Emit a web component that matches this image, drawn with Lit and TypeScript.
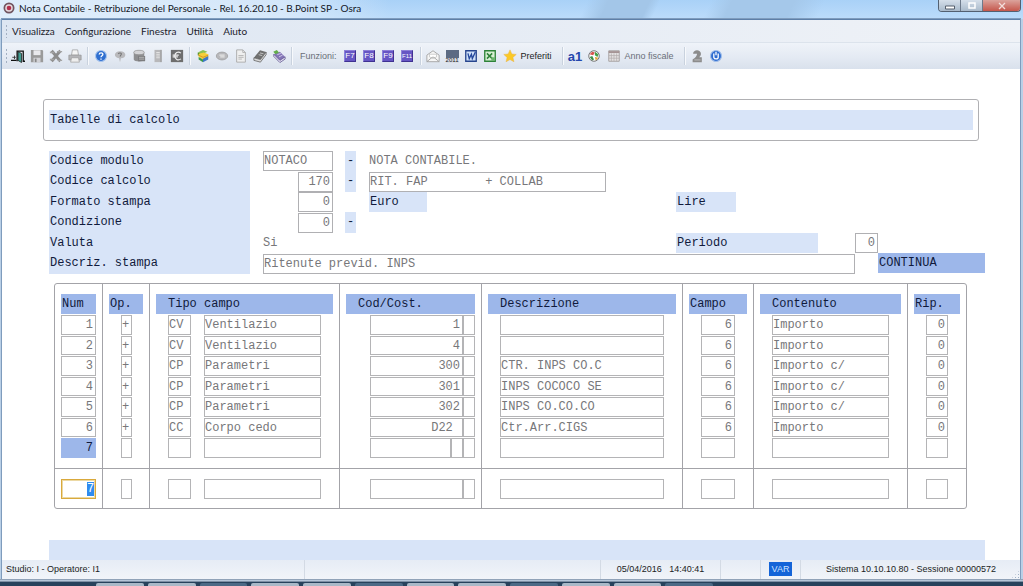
import { LitElement, html, svg, css, nothing } from 'lit';
import { customElement, property } from 'lit/decorators.js';
import { classMap } from 'lit/directives/class-map.js';

const glyphs: Record<string, unknown> = {
  exit: svg`<path d="M0 13h6M7 14V2.500h7V14h2" fill="none" stroke="#111" stroke-width="1.500"/><path d="M8 3l4 2v10.500l-4-2.500z" fill="#3f9d92" stroke="#111" stroke-width=".8"/><path d="M1.500 9.500h4M4 7.500v4" stroke="#333"/>`,
  save: svg`<path d="M1 1h13l1 1v13H1z" fill="#9a9a9a"/><path d="M4 1.500h8V7H4z" fill="#e9e9ec"/><path d="M4 10h8v5H4z" fill="#d2d2d6"/><path d="M5.500 11h2v4h-2z" fill="#888"/>`,
  cancel: svg`<path d="M3 2l10 12M13 2L3 14" stroke="#8c8c8c" stroke-width="3.400"/><path d="M1 4h5M9 3h6M1 12h5M10 13h5" stroke="#a4a4a4" stroke-width="1.500"/>`,
  print: svg`<path d="M5 1h6l1 6H4z" fill="#f4f4f4" stroke="#999" stroke-width=".8"/><path d="M1 7h14v5.500H1z" fill="#b5b5b8" stroke="#929292" stroke-width=".8"/><path d="M4 10h8l1 5H3z" fill="#eee" stroke="#999" stroke-width=".8"/>`,
  help: svg`<circle cx="8" cy="8" r="6.300" fill="#2f6fd0" stroke="#a9c6ee" stroke-width="1.300"/><path d="M5.900 6.300c.2-2.600 4.400-2.400 4.200 0C10 7.800 8 7.700 8 9.500M8 10.800v1.500" fill="none" stroke="#fff" stroke-width="1.500"/>`,
  bubble: svg`<path d="M8 2.500c8 0 8 8 1 8L8 15l-1-4.500C0 9.500 1 2.500 8 2.500z" fill="#b9b9bc"/><path d="M6 5.500c1-1.500 4-1 3.500.5L8 8.500" fill="none" stroke="#777" stroke-width="1.300"/>`,
  drum: svg`<path d="M2 4v8c0 3 12 3 12 0V4z" fill="#8e8e90"/><ellipse cx="8" cy="4" rx="6" ry="2.500" fill="#d4d4d7" stroke="#888" stroke-width=".7"/><path d="M7 8h8v6H7z" fill="#7c7c7e"/><path d="M8 9.500h6M8 11.500h6" stroke="#ccc" stroke-width=".8"/>`,
  sheet: svg`<path d="M4 1h8v14H4z" fill="#b8b8ba"/><path d="M6 4h4M6 6h4M6 8h4M6 10h4" stroke="#e8e8e8"/><path d="M11.500 1v14" stroke="#8c8c8c"/>`,
  coin: svg`<path d="M1 1h14v14H1z" fill="#6e6e6e"/><path d="M12.500 4.700C9 2 5.500 4.500 5.500 8s3.500 6 7 3.300M3 7h7M3 9h6" fill="none" stroke="#eee" stroke-width="1.400"/>`,
  books: svg`<path d="M2 4l6-3 5 2-6 3z" fill="#8cc152"/><path d="M2 4l5 2v3L2 7z" fill="#4a8c2b"/><path d="M3 5.500L9 4l5 2v4l-6 2-5-3z" fill="#f5cf3a"/><path d="M3 9l5 3v3l-5-3z" fill="#3f9a4a"/><path d="M8 11l6-3v4l-6 3z" fill="#3f78c8"/><path d="M3 7l5 2.500 6-2.500" fill="none" stroke="#d68c1e"/>`,
  disc: svg`<ellipse cx="8" cy="8" rx="6.500" ry="4.500" fill="#b8b8bb" stroke="#9a9a9a" stroke-width=".8"/><path d="M5 7h6M6 9h5" stroke="#e5e5e5" stroke-width="1.200"/>`,
  page: svg`<path d="M3 1h7l3 3v11H3z" fill="#efefef" stroke="#a8a8a8"/><path d="M10 1v3h3M5 7.500h6M5 9.500h6M5 11.500h4" fill="none" stroke="#b0b0b0"/>`,
  book: svg`<path d="M1 10l7-8.500 7 2L8.500 12z" fill="#707070"/><path d="M1 10l7.500 2L15 3.500V6.500L8.500 15 1 13z" fill="#d8d8d8" stroke="#555" stroke-width=".8"/><path d="M6.500 6.500l4 1M8 4.500l4 1" stroke="#ccc"/>`,
  address: svg`<path d="M2 6l7-3 6 6-6 4z" fill="#8475b6"/><path d="M9 13l6-4v2.500L9 15.500 2 8.500V6z" fill="#e4e0f0" stroke="#554988" stroke-width=".8"/><path d="M6 6.500l4-1.500M8 9l4-2" stroke="#d8d2ee"/><path d="M1.500 3l4-2 2.500 3-4 2z" fill="#62ad4b"/>`,
  mail: svg`<path d="M1 7l7-5 7 5v7.500H1z" fill="#f6f6f6" stroke="#a0a0a0"/><path d="M4 6h8v3l-4 2-4-2z" fill="#fff" stroke="#b4b4b4" stroke-width=".7"/><path d="M1 14.500L7 9.500h2l6 5" fill="none" stroke="#a0a0a0"/>`,
  word: svg`<path d="M2 2h12v12H2z" fill="#cfe0f8" stroke="#27458d" stroke-width="1.500"/><path d="M4.500 5L6 11 8.500 6l1 5 3.500-7.500" fill="none" stroke="#24479c" stroke-width="1.500"/>`,
  excel: svg`<path d="M2 2h12v12H2z" fill="#d8f0d4" stroke="#2d8238" stroke-width="1.500"/><path d="M4.500 5l6 6M10.500 5l-6 6" stroke="#2d8238" stroke-width="1.700"/><path d="M9.500 9.500h4v4h-4z" fill="#6bb56d"/>`,
  star: svg`<path d="M8 1l2.100 4.700 5 .5-3.800 3.400 1.200 5L8 12l-4.500 2.600 1.200-5L.9 6.200l5-.5z" fill="#fbc926" stroke="#e9b44a" stroke-width=".6"/>`,
  globe: svg`<circle cx="8" cy="8" r="6" fill="#fff" stroke="#666" stroke-width="1"/><path d="M3 6l3-3 3 1-2 3z" fill="#d9534f"/><path d="M9 3l4 3-1 3-3-2z" fill="#45a049"/><path d="M3 9l3-1 2 4-2 1z" fill="#3f8f48"/><path d="M9 9l4 1-3 3z" fill="#e2a02d"/>`,
  calendar: svg`<path d="M2 2h12v12H2z" fill="#e4e2e2" stroke="#a19c9c"/><path d="M2 3.500h12" stroke="#a08e8e" stroke-width="2"/><path d="M2 7.500h12M2 10.500h12M5 5v9M8 5v9M11 5v9" stroke="#b1acac" stroke-width=".8"/>`,
  person: svg`<path d="M3.500 5.500C3.500 0 12.500 0 12.500 5.500c0 2-1 3-2 4h3V15H3v-3c2-1 5-3.500 5-6.500z" fill="#8c8c8c"/><path d="M5 12.500h7" stroke="#c4c4c4"/>`,
  info: svg`<circle cx="8" cy="8" r="6.300" fill="#2e6cd0" stroke="#a4c0ea" stroke-width="1.300"/><path d="M5.500 5v4.500c.5 2.500 5 2.500 5 0V5M8 3v4" fill="none" stroke="#fff" stroke-width="1.500"/>`,
};

@customElement('tool-icon')
export class ToolIcon extends LitElement {
  static styles = css`
    :host { display: inline-flex; width: 14px; height: 14px; }
    svg { display: block; width: 100%; height: 100%; }
  `;
  @property() name = '';
  render() {
    return html`<svg viewBox="0 0 16 16" aria-hidden="true">${glyphs[this.name] ?? nothing}</svg>`;
  }
}

interface Row {
  num: string; op: string; tipo: string; nome: string; cod: string;
  descr: string; campo: string; contenuto: string; rip: string;
}

const row = (num: string, op: string, tipo: string, nome: string, cod: string,
  descr: string, campo: string, contenuto: string, rip: string): Row =>
  ({ num, op, tipo, nome, cod, descr, campo, contenuto, rip });

const rows: Row[] = [
  row('1', '+', 'CV', 'Ventilazio', '1', '', '6', 'Importo', '0'),
  row('2', '+', 'CV', 'Ventilazio', '4', '', '6', 'Importo', '0'),
  row('3', '+', 'CP', 'Parametri', '300', 'CTR. INPS CO.C', '6', 'Importo c/', '0'),
  row('4', '+', 'CP', 'Parametri', '301', 'INPS COCOCO SE', '6', 'Importo c/', '0'),
  row('5', '+', 'CP', 'Parametri', '302', 'INPS CO.CO.CO', '6', 'Importo c/', '0'),
  row('6', '+', 'CC', 'Corpo cedo', 'D22 ', 'Ctr.Arr.CIGS', '6', 'Importo', '0'),
  row('7', '', '', '', '', '', '', '', ''),
];

@customElement('calc-table')
export class CalcTable extends LitElement {
  static styles = css`
    :host { display: block; }
    table { display: block; border: 1px solid #a3a3a8; border-radius: 3px; }
    thead, tbody, tfoot { display: block; }
    tr {
      display: grid;
      grid-template-columns: 47fr 47fr 190fr 142fr 201fr 71fr 154fr 59fr;
      height: 20px;
    }
    tbody tr:nth-child(odd) { height: 21px; }
    th, td { display: flex; min-width: 0; padding: 0 6px; border-left: 1px solid #a3a3a8; }
    th:first-child, td:first-child { border-left: 0; }
    thead tr { height: 31px; }
    th { padding-top: 10px; padding-bottom: 1px; text-align: left; font-weight: 400; }
    .head { flex: 1; background: #9db7ea; color: #101a3c; line-height: 20px; padding-left: 1px; white-space: nowrap; }
    .head.inset { padding-left: 12px; }
    tbody tr:last-child { height: 30px; }
    tbody tr:last-child td { padding-bottom: 10px; }
    tfoot tr { height: 40px; border-top: 1px solid #a3a3a8; box-sizing: border-box; }
    tfoot td { padding-top: 10px; }
    .inset-cell { padding-left: 18px; padding-right: 18px; }
    .cod { padding-left: 30px; }
    input {
      box-sizing: border-box; flex: 1; min-width: 0; height: 20px; margin: 0; padding: 0;
      border: 1px solid #b4b4b6; border-radius: 0; background: #fff; color: #77777a;
      font: 12px "Liberation Mono", "Courier New", monospace; outline: none;
    }
    tbody tr:nth-child(even) input { height: 19px; }
    .right { text-align: right; padding-right: 2px; }
    .one { flex: 0 0 11px; }
    .two { flex: 0 0 23px; margin-right: 13px; }
    .end { flex: 0 0 12px; }
    .current { background: #9db7ea; border-color: #9db7ea; color: #101a3c; }
    .active { display: flex; flex: 1; height: 20px; box-sizing: border-box; border: 1px solid #d9a93c; outline: 1px solid #ecd9a4; outline-offset: -2px; }
    .active input { border: 0; height: 14px; flex: 0 0 8px; margin: 2px 0 0 auto; background: #2f8cf0; color: #fff; }
  `;

  private cells(r: Row, isLast: boolean, entry = false) {
    const f = (value: string, label: string, cls = '') =>
      html`<input class=${cls} aria-label=${`${label} ${entry ? 'nuova riga' : r.num}`} .value=${value} ?readonly=${!entry}>`;
    return html`<tr>
      <td>${entry
        ? html`<span class="active"><input aria-label="Numero riga" .value=${r.num}></span>`
        : f(r.num, 'Num', isLast ? 'right current' : 'right')}</td>
      <td class="inset-cell">${f(r.op, 'Op.', 'one')}</td>
      <td class="inset-cell">${f(r.tipo, 'Tipo', 'two')}${f(r.nome, 'Tipo campo')}</td>
      <td class="cod">${f(r.cod, 'Cod/Cost.', 'right')}${isLast && !entry ? f('', 'Cod/Cost. parte 2', 'end') : nothing}${f('', 'Cod/Cost. segno', 'end')}</td>
      <td class="inset-cell">${f(r.descr, 'Descrizione')}</td>
      <td class="inset-cell">${f(r.campo, 'Campo', 'right')}</td>
      <td class="inset-cell">${f(r.contenuto, 'Contenuto')}</td>
      <td class="inset-cell">${f(r.rip, 'Rip.', 'right')}</td>
    </tr>`;
  }

  render() {
    const heads: [string, boolean][] = [['Num', false], ['Op.', false], ['Tipo campo', true], ['Cod/Cost.', true],
      ['Descrizione', true], ['Campo', false], ['Contenuto', true], ['Rip.', false]];
    return html`<table>
      <thead><tr>${heads.map(([t, inset]) => html`<th scope="col"><span class=${classMap({ head: true, inset })}>${t}</span></th>`)}</tr></thead>
      <tbody>${rows.map((r, i) => this.cells(r, i === rows.length - 1))}</tbody>
      <tfoot>${this.cells(rows[6], true, true)}</tfoot>
    </table>`;
  }
}

@customElement('tool-bar')
export class ToolBar extends LitElement {
  static styles = css`
    :host {
      display: flex; align-items: center; height: 26px; padding-left: 3px; box-sizing: border-box;
      background: linear-gradient(#eff3f9, #e4eaf3 55%, #d9e1ec);
      font: 9px "Liberation Sans", Arial, sans-serif; color: #1c1c1c;
    }
    button {
      display: flex; align-items: center; justify-content: center; min-width: 19px; height: 20px;
      margin: 0; padding: 0; border: 0; background: none; font: inherit; color: inherit; white-space: nowrap;
    }
    button:disabled { color: #6a6f78; }
    .grip { width: 3px; height: 16px; background: radial-gradient(circle, #a3b0c2 1px, transparent 1px) 0 0 / 3px 4px; }
    .sep { width: 1px; height: 18px; margin: 0 3px; background: #c9d2de; box-shadow: 1px 0 #f7f9fc; }
    .caption { padding: 0 4px 0 5px; color: #6a6f78; }
    .wide { gap: 4px; padding: 0 7px 0 3px; }
    .fkey { width: 12px; height: 12px; background: #6656c4; border: 1px solid #8d80d8; border-right-color: #3f3292; border-bottom-color: #3f3292; box-sizing: border-box; color: #fff; font-size: 8px; line-height: 10px; text-align: center; }
    .fkey.small { font-size: 6px; }
    .year { width: 13px; height: 13px; box-sizing: border-box; padding-top: 7px; background: linear-gradient(#5b6a83 8px, #d9dde6 8px); color: #222; font-size: 6px; line-height: 6px; }
    .letters { color: #2447ad; font: bold 13px "Liberation Sans", sans-serif; }
  `;
  private icons(list: [string, string][]) {
    return list.map(([name, title]) => html`<button aria-label=${title}><tool-icon name=${name}></tool-icon></button>`);
  }
  render() {
    const sep = html`<span class="sep"></span>`;
    return html`
      <span class="grip"></span>
      ${this.icons([['exit', 'Esci'], ['save', 'Salva'], ['cancel', 'Annulla'], ['print', 'Stampa']])}${sep}
      ${this.icons([['help', 'Guida'], ['bubble', 'Note'], ['drum', 'Archivio'], ['sheet', 'Documento'], ['coin', 'Valuta']])}${sep}
      ${this.icons([['books', 'Raccolta'], ['disc', 'Supporto'], ['page', 'Pagina'], ['book', 'Manuale'], ['address', 'Rubrica']])}${sep}
      <span class="caption">Funzioni:</span>
      ${['F7', 'F8', 'F9', 'F11'].map((k) => html`<button><span class=${classMap({ fkey: true, small: k.length > 2 })}>${k}</span></button>`)}${sep}
      <button aria-label="Posta"><tool-icon name="mail"></tool-icon></button>
      <button><span class="year">2011</span></button>
      ${this.icons([['word', 'Word'], ['excel', 'Excel']])}
      <button class="wide"><tool-icon name="star"></tool-icon>Preferiti</button>${sep}
      <button><span class="letters">a1</span></button>
      ${this.icons([['globe', 'Collegamenti']])}
      <button class="wide" disabled><tool-icon name="calendar"></tool-icon>Anno fiscale</button>${sep}
      ${this.icons([['person', 'Utente'], ['info', 'Informazioni']])}`;
  }
}

@customElement('app-root')
export class AppRoot extends LitElement {
  static styles = css`
    :host {
      display: flex; flex-direction: column; min-height: 100vh; box-sizing: border-box;
      background: #b9cfe6; color: #101a3c; font: 12px "Liberation Mono", "Courier New", monospace;
    }
    .title {
      display: flex; align-items: flex-start; height: 19px; padding: 0 2px 0 3px;
      background:
        linear-gradient(90deg, rgba(228,240,251,.9), rgba(222,236,250,.8) 28%, transparent 38%),
        linear-gradient(115deg, transparent 57%, #a3c6e8 59%, #a3c6e8 63%, transparent 64%, transparent 69%, #a5c8ea 71%, #a5c8ea 77%, transparent 80%),
        linear-gradient(#a9d1f7, #bcdcfb);
      color: #14181f;
    }
    .logo { width: 12px; height: 12px; margin: 2px 4px 0 0; }
    h1 { flex: 1; margin: 0; font: 10px/16px Lato, "Noto Sans", sans-serif; white-space: nowrap; }
    .controls { display: flex; height: 12px; border: 1px solid #536071; border-top: 0; border-radius: 0 0 4px 4px; box-sizing: border-box; overflow: hidden; }
    .controls button { display: flex; align-items: center; justify-content: center; width: 22px; padding: 0; border: 0; border-right: 1px solid #6d7a8b; background: linear-gradient(#d5dfea, #a9bacb); }
    .controls .close { width: 37px; border-right: 0; background: linear-gradient(#dba39c, #c5574c); }
    .controls svg { width: 10px; height: 8px; }
    .window { display: flex; flex: 1; flex-direction: column; margin: 0 3px 0 2px; border-top: 1px solid #5d7fa8; outline: 1px solid #7f9cbd; background: #fff; }
    nav { display: flex; align-items: center; gap: 10px; height: 23px; padding-left: 3px; border-bottom: 1px solid #dce3ec; background: linear-gradient(90deg, #dde6f2, #eff2f7); font: 10px Lato, "Noto Sans", sans-serif; box-sizing: border-box; }
    nav a { color: #1c222c; text-decoration: none; }
    .grip { width: 3px; height: 14px; margin-right: -6px; background: radial-gradient(circle, #a3b0c2 1px, transparent 1px) 0 0 / 3px 4px; }
    main { display: flex; flex: 1; flex-direction: column; padding-top: 30px; }
    .banner { margin: 0 41px; padding: 10px 5px; border: 1px solid #b0b0b3; border-radius: 3px; }
    h2 { margin: 0; padding-left: 1px; background: #d8e4f8; font: inherit; line-height: 20px; }
    form {
      display: grid; margin: 10px 35px 0 47px;
      grid-template-columns: 201px 13px 70px 12px 11px 13px minmax(0, 1fr) 142px 37px 23px 107px;
      grid-template-rows: repeat(3, 20px 21px);
    }
    form label, .tag { padding-left: 1px; background: #d8e4f8; line-height: 20px; }
    .r1 { grid-row: 1; } .r2 { grid-row: 2; } .r3 { grid-row: 3; }
    .r4 { grid-row: 4; } .r5 { grid-row: 5; } .r6 { grid-row: 6; }
    .name { grid-column: 1; }
    .value { grid-column: 3; }
    .short { width: 35px; justify-self: end; }
    .dash { grid-column: 5; text-align: center; padding: 0; }
    .detail { grid-column: 7; }
    .text { color: #77777a; line-height: 20px; }
    .calc { width: 237px; }
    .euro { width: 57px; }
    .side { grid-column: 8; }
    .lire { width: 59px; }
    .period { grid-column: 10; }
    .long { grid-column: 3 / 10; }
    input { box-sizing: border-box; width: 100%; height: 20px; min-width: 0; margin: 0; padding: 0; align-self: center; border: 1px solid #b0b0b3; background: #fff; color: #77777a; font: inherit; outline: none; }
    .right { text-align: right; padding-right: 2px; }
    .go { grid-column: 11; height: 20px; padding: 0 0 0 1px; border: 0; background: #9db7ea; color: #101a3c; font: inherit; text-align: left; }
    calc-table { margin: 9px 53px 31px 52px; }
    .message { height: 20px; margin: auto 35px 0 47px; background: #d8e4f8; }
    .status { display: flex; height: 19px; background: linear-gradient(#e6ecf5, #f1f4f9); color: #1a1d24; font: 9px/19px "Liberation Sans", Arial, sans-serif; white-space: pre; }
    .status > * { box-sizing: border-box; border-right: 1px solid #d3dae4; text-align: center; }
    .status .op { flex: 301 1 0; padding-left: 4px; text-align: left; }
    .status .free { flex: 298 1 0; }
    .status .date { flex: 0 0 120px; }
    .status .slot { flex: 0 0 40px; }
    .status .session { display: flex; flex: 0 0 219px; justify-content: space-between; align-items: flex-end; padding-left: 25px; border: 0; }
    .var { display: inline-block; padding: 0 3px; background: #1464d8; color: #cfe3ff; line-height: 14px; }
    .size { width: 9px; height: 9px; background: radial-gradient(circle, #9fb0c6 1px, transparent 1px) 0 0 / 3px 3px; clip-path: polygon(100% 0, 100% 100%, 0 100%); }
    .frame { height: 3px; background: linear-gradient(#7d90a8, #b5c6d8, #62758c); }
    .taskbar { display: flex; gap: 4px; height: 4px; padding: 0 310px 0 96px; background: #27425c; }
    .taskbar i { flex: 1; margin-top: 1px; border-radius: 2px 2px 0 0; background: #a9b9c8; }
    .taskbar i:nth-child(3n) { background: #4c6a86; }
  `;

  render() {
    return html`
      <header class="title">
        <svg class="logo" viewBox="0 0 12 12" aria-hidden="true"><circle cx="6" cy="6" r="5.500" fill="#70545f"/><circle cx="6" cy="6" r="3.800" fill="#e6dade"/><circle cx="6" cy="6" r="2.300" fill="#b32f4c"/></svg>
        <h1>Nota Contabile - Retribuzione del Personale - Rel. 16.20.10 - B.Point SP - Osra</h1>
        <div class="controls">
          <button aria-label="Riduci"><svg viewBox="0 0 10 8"><path d="M.5 4h9v3h-9z" fill="#fff" stroke="#555f6c"/></svg></button>
          <button aria-label="Ingrandisci"><svg viewBox="0 0 10 8"><path d="M2 1h6v5H2z" fill="none" stroke="#fff" stroke-width="1.500"/></svg></button>
          <button class="close" aria-label="Chiudi"><svg viewBox="0 0 10 8"><path d="M2 1l6 6M8 1L2 7" stroke="#f3dedb" stroke-width="1.300"/></svg></button>
        </div>
      </header>
      <div class="window">
        <nav><span class="grip"></span>${['Visualizza', 'Configurazione', 'Finestra', 'Utilità', 'Aiuto'].map((m) => html`<a href="#">${m}</a>`)}</nav>
        <tool-bar></tool-bar>
        <main>
          <div class="banner"><h2>Tabelle di calcolo</h2></div>
          <form @submit=${(e: Event) => e.preventDefault()}>
            <label class="name r1" for="modulo">Codice modulo</label>
            <label class="name r2" for="calcolo">Codice calcolo</label>
            <label class="name r3" for="formato">Formato stampa</label>
            <label class="name r4" for="condizione">Condizione</label>
            <span class="name r5 tag">Valuta</span>
            <label class="name r6" for="descrizione">Descriz. stampa</label>
            <input class="value r1" id="modulo" .value=${'NOTACO'} readonly>
            <input class="value r2 short right" id="calcolo" .value=${'170'} readonly>
            <input class="value r3 short right" id="formato" .value=${'0'} readonly>
            <input class="value r4 short right" id="condizione" .value=${'0'} readonly>
            <span class="value r5 text">Si</span>
            <span class="dash tag r1">-</span><span class="dash tag r2">-</span><span class="dash tag r4">-</span>
            <span class="detail r1 text">NOTA CONTABILE.</span>
            <input class="detail r2 calc" aria-label="Descrizione calcolo" .value=${'RIT. FAP        + COLLAB'} readonly>
            <span class="detail r3 tag euro">Euro</span>
            <span class="side r3 tag lire">Lire</span>
            <label class="side r5" for="periodo">Periodo</label>
            <input class="period r5 right" id="periodo" .value=${'0'} readonly>
            <input class="long r6" id="descrizione" .value=${'Ritenute previd. INPS'} readonly>
            <button class="go r6">CONTINUA</button>
          </form>
          <calc-table></calc-table>
          <div class="message"></div>
        </main>
        <footer class="status">
          <span class="op">Studio: I - Operatore: I1</span><span class="free"></span>
          <span class="date">05/04/2016   14:40:41</span><span class="slot"></span>
          <span class="slot"><span class="var">VAR</span></span>
          <span class="session"><span>Sistema 10.10.10.80 - Sessione 00000572</span><span class="size"></span></span>
        </footer>
      </div>
      <div class="frame"></div>
      <div class="taskbar" aria-hidden="true">${Array.from({ length: 12 }, () => html`<i></i>`)}</div>`;
  }
}
